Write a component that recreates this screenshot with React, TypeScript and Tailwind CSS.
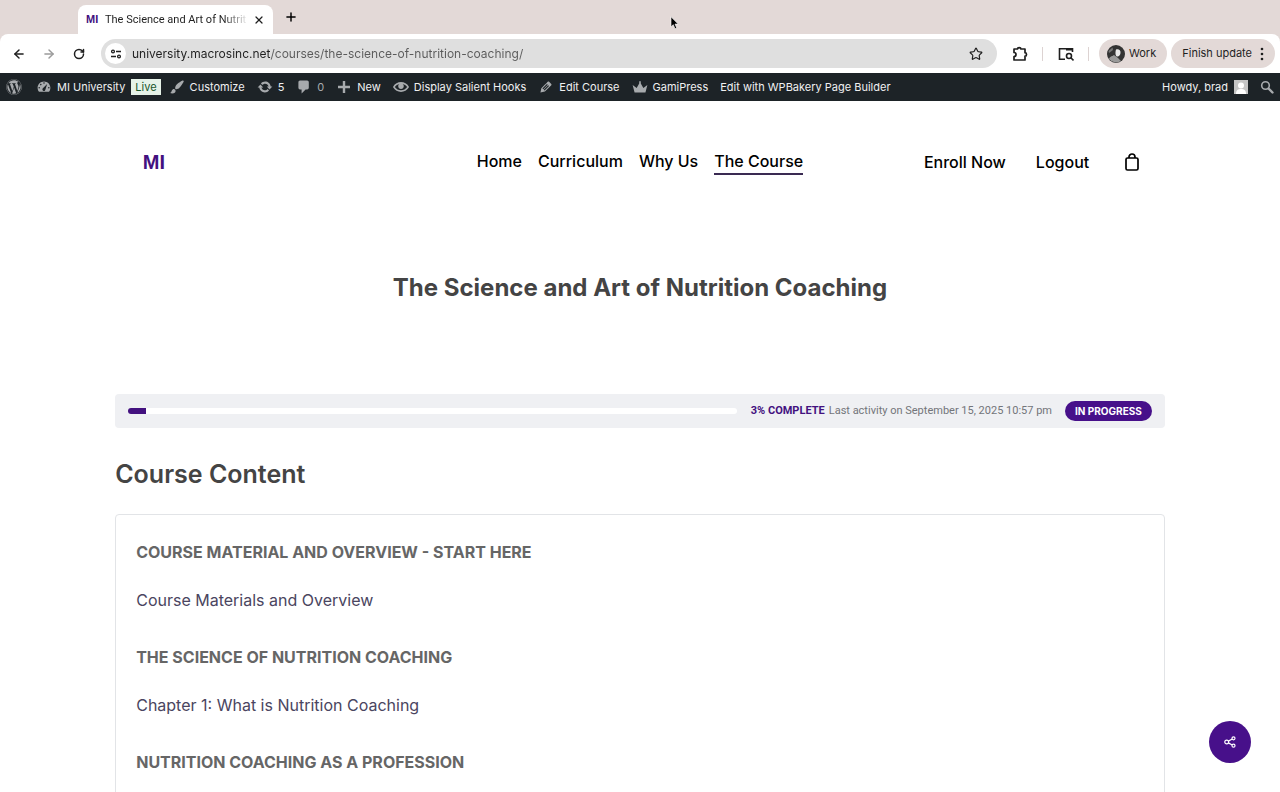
import React from 'react';
import { ArrowLeft, ArrowRight, Plus, RotateCw, Star, X } from 'lucide-react';
import { FaWordpress } from 'react-icons/fa';

const ADMIN_ICONS = {
  dashboard: 'M3.76 16h12.48c1.1-1.37 1.76-3.11 1.76-5 0-4.42-3.58-8-8-8s-8 3.58-8 8c0 1.89.66 3.63 1.76 5zM10 4c.55 0 1 .45 1 1s-.45 1-1 1-1-.45-1-1 .45-1 1-1zM6 6c.55 0 1 .45 1 1s-.45 1-1 1-1-.45-1-1 .45-1 1-1zm-2 4c.55 0 1 .45 1 1s-.45 1-1 1-1-.45-1-1 .45-1 1-1zm12 0c.55 0 1 .45 1 1s-.45 1-1 1-1-.45-1-1 .45-1 1-1zm-7.4 1.6L14 6.3 11.8 13c-.2 1.1-.9 2-1.9 2s-1.9-.9-1.9-1.9c0-.6.2-1.1.6-1.5z',
  brush: 'M18.33 3.57s.27-.8-.31-1.36c-.53-.52-1.22-.24-1.22-.24-.61.3-5.76 3.47-7.67 5.57-.86.96-2.06 3.79-1.09 4.82.92.98 3.96-.17 4.79-1 2.06-2.06 5.21-7.17 5.5-7.79zM1.4 17.65c2.37-1.56 1.46-3.41 3.23-4.64.93-.65 2.22-.62 3.08.29.63.67.8 2.57-.16 3.46-1.57 1.45-4 1.55-6.15.89z',
  update: 'M10.2 3.28c3.53 0 6.43 2.61 6.92 6h2.08l-3.5 4-3.5-4h2.32c-.45-1.97-2.21-3.45-4.32-3.45-1.45 0-2.73.71-3.54 1.78L4.95 5.66C6.23 4.2 8.11 3.28 10.2 3.28zm-.4 13.44c-3.52 0-6.43-2.61-6.92-6H.8l3.5-4 3.5 4H5.48c.45 1.97 2.21 3.45 4.32 3.45 1.45 0 2.73-.71 3.54-1.78l1.71 1.95c-1.28 1.46-3.15 2.38-5.25 2.38z',
  comment: 'M5 2h9c1.1 0 2 .9 2 2v7c0 1.1-.9 2-2 2h-2l-5 5v-5H5c-1.1 0-2-.9-2-2V4c0-1.1.9-2 2-2z',
  plus: 'M17.5 8.5v3h-6v6h-3v-6h-6v-3h6v-6h3v6z',
  eye: 'M19.7 9.4C17.7 6 14 3.9 10 3.9S2.3 6 .3 9.4L0 10l.3.6c2 3.4 5.7 5.5 9.7 5.5s7.7-2.1 9.7-5.5l.3-.6-.3-.6zM10 14.1c-3.1 0-6-1.6-7.7-4.1C3.6 8 5.7 6.6 8 6.1c-.9.6-1.5 1.7-1.5 2.9 0 1.9 1.6 3.5 3.5 3.5s3.5-1.6 3.5-3.5c0-1.2-.6-2.3-1.5-2.9 2.3.5 4.4 1.9 5.7 3.9-1.7 2.5-4.6 4.1-7.7 4.1z',
  pencil: 'M13.89 3.39l2.71 2.72c.46.46.42 1.24.03 1.64l-8.01 8.02-5.56 1.16 1.16-5.58s7.6-7.63 7.99-8.03c.39-.39 1.22-.39 1.68.07zm-2.73 2.79l-5.59 5.61 1.11 1.11 5.54-5.65zm-2.97 8.23l5.58-5.6-1.07-1.08-5.59 5.6z',
  crown: 'M3.2 16.8L.8 7.6l5 3.6L9 5.5V2.8h2v2.7l3.2 5.7 5-3.6-2.4 9.2z',
};

function AdminIcon({ name }: { name: keyof typeof ADMIN_ICONS }) {
  return (
    <svg viewBox="0 0 20 20" className="w-4 h-4 shrink-0 fill-[#a7aaad]" fillRule="evenodd" aria-hidden="true">
      <path d={ADMIN_ICONS[name]} />
    </svg>
  );
}

function BrowserTabs() {
  return (
    <div className="flex items-end h-[34px] bg-[#e3d9d7] pl-[78px]">
      <div className="flex items-center h-[29px] w-[195px] px-2 rounded-t-lg bg-white text-[#1f1f1f]">
        <span className="w-[19px] font-['Liberation_Sans',sans-serif] font-bold text-[11px] text-[#43117f]">MI</span>
        <span title="The Science and Art of Nutrition Coaching" className="flex-1 whitespace-nowrap font-[Roboto,sans-serif] text-[11px] leading-6 [mask-image:linear-gradient(90deg,#000_82%,transparent)]">
          The Science and Art of Nutrit
        </span>
        <button aria-label="Close tab" className="ml-1"><X className="w-3 h-3" strokeWidth={2.5} /></button>
      </div>
      <button aria-label="New tab" className="mb-2.5 ml-[11px]"><Plus className="w-3.5 h-3.5" strokeWidth={2.5} /></button>
    </div>
  );
}

function BrowserToolbar() {
  return (
    <div className="bg-[#e3d9d7]">
      <div className="flex items-center h-[39px] pl-3 pr-[5px] rounded-t-lg bg-white text-[#1f1f1f]">
        <button aria-label="Back"><ArrowLeft className="w-3.5 h-3.5" strokeWidth={2.5} /></button>
        <button aria-label="Forward" className="ml-4 text-[#9b9b9b]"><ArrowRight className="w-3.5 h-3.5" strokeWidth={2.5} /></button>
        <button aria-label="Reload" className="ml-[17px]"><RotateCw className="w-3 h-3" strokeWidth={3} /></button>
        <div className="flex items-center flex-1 h-[29px] ml-4 pl-1 pr-3.5 rounded-full bg-[#dfdfdf]">
          <button aria-label="Site information" className="grid place-items-center w-[21px] h-[21px] rounded-full bg-white">
            <svg viewBox="0 0 12 12" className="w-3 h-3 fill-none stroke-current" strokeWidth="1.3">
              <circle cx="3" cy="3.5" r="1.4" /><path d="M6 3.5h5M1 8.5h5" /><circle cx="9" cy="8.5" r="1.4" />
            </svg>
          </button>
          <input
            aria-label="Address"
            defaultValue="university.macrosinc.net/courses/the-science-of-nutrition-coaching/"
            className="flex-1 min-w-0 ml-[6px] text-xs outline-none text-transparent bg-clip-text bg-[linear-gradient(90deg,#1f1f1f_139px,#5a5a5a_139px)]"
          />
          <button aria-label="Bookmark this page"><Star className="w-3.5 h-3.5" strokeWidth={2} /></button>
        </div>
        <button aria-label="Extensions" className="ml-[15px]">
          <svg viewBox="0 0 16 16" className="w-4 h-4 fill-none stroke-current" strokeWidth="1.7" strokeLinejoin="round">
            <path d="M2 3h3.5a1.7 1.3 0 0 1 3.4 0H13v3.7a1.5 1.7 0 0 1 0 3.4V14H2v-3.5a2 2 0 0 0 0-4z" />
          </svg>
        </button>
        <span className="w-px h-3.5 ml-3.5 bg-[#ddd3d2]" />
        <button aria-label="Search with Lens" className="ml-[15px]">
          <svg viewBox="0 0 16 16" className="w-4 h-4 fill-none stroke-current" strokeWidth="1.6">
            <path d="M7 13.2H1.5V2.8h13V6" /><path d="M8 3.5h6" strokeWidth="2" /><circle cx="11" cy="10" r="2.5" /><path d="M12.8 11.8l2.7 2.7" />
          </svg>
        </button>
        <span className="w-px h-3.5 ml-3.5 bg-[#ddd3d2]" />
        <button className="flex items-center gap-1 h-[29px] ml-2.5 pl-2 pr-[11px] rounded-full bg-[#e3d9d7] text-[11px]">
          <svg viewBox="0 0 18 18" className="w-[18px] h-[18px]">
            <circle cx="9" cy="9" r="9" fill="#333" />
            <path d="M2 14c1-3 4-3 5-4l4 3 3 3a9 9 0 0 1-12-2z" fill="#999" />
            <path d="M9 4.5c2-1 5 0 4.5 3.5-.3 2.5-2 4-3.5 3.5S8 8 9 4.5z" fill="#e8e8e8" />
            <path d="M1.5 6l4-3.5L6 5 2 8z" fill="#777" />
          </svg>
          Work
        </button>
        <button className="flex items-center h-[29px] ml-1 px-[11px] rounded-full bg-[#e3d9d7] text-[11px] whitespace-nowrap">
          Finish update
          <svg viewBox="0 0 4 14" className="w-1 h-3.5 ml-2 fill-current"><circle cx="2" cy="2" r="1.3" /><circle cx="2" cy="7" r="1.3" /><circle cx="2" cy="12" r="1.3" /></svg>
        </button>
      </div>
    </div>
  );
}

function AdminBar() {
  return (
    <div className="flex items-center h-7 px-1.5 bg-[#1d2327] text-[#f0f0f1] text-[11px] whitespace-nowrap">
      <a href="#" aria-label="About WordPress"><FaWordpress className="w-4 h-4 text-[#a7aaad]" /></a>
      <a href="#" className="flex items-center gap-[5px] ml-3.5"><AdminIcon name="dashboard" />MI University</a>
      <span className="ml-1.5 px-1 h-4 leading-4 bg-[#e6f2e8] text-[#17552a]">Live</span>
      <a href="#" className="flex items-center gap-[5px] ml-2"><AdminIcon name="brush" />Customize</a>
      <a href="#" className="flex items-center gap-[5px] ml-3"><AdminIcon name="update" />5</a>
      <a href="#" className="flex items-center gap-[5px] ml-3 text-[#a7aaad]"><AdminIcon name="comment" />0</a>
      <a href="#" className="flex items-center gap-[5px] ml-3"><AdminIcon name="plus" />New</a>
      <a href="#" className="flex items-center gap-[5px] ml-3"><AdminIcon name="eye" />Display Salient Hooks</a>
      <a href="#" className="flex items-center gap-[5px] ml-3"><AdminIcon name="pencil" />Edit Course</a>
      <a href="#" className="flex items-center gap-[5px] ml-3"><AdminIcon name="crown" />GamiPress</a>
      <a href="#" className="ml-3">Edit with WPBakery Page Builder</a>
      <a href="#" className="flex items-center gap-1.5 ml-auto">
        Howdy, brad
        <svg viewBox="0 0 14 14" className="w-3.5 h-3.5"><path d="M0 0h14v14H0z" fill="#c5c5c5" /><circle cx="7" cy="5.5" r="3" fill="#fff" /><path d="M2 14c0-4 2-5 5-5s5 1 5 5z" fill="#fff" /></svg>
      </a>
      <button aria-label="Search" className="ml-3">
        <svg viewBox="0 0 14 14" className="w-3.5 h-3.5 fill-none stroke-[#a7aaad]"><circle cx="5.5" cy="5.5" r="3.8" strokeWidth="1.6" /><path d="M8.5 8.5l4 4" strokeWidth="2.4" strokeLinecap="round" /></svg>
      </button>
    </div>
  );
}

const navLinks = ['Home', 'Curriculum', 'Why Us', 'The Course'];

function SiteHeader() {
  return (
    <header className="grid grid-cols-[1fr_auto_1fr] items-center h-[122px] px-[11%] text-base font-medium text-black">
      <a href="#" className="w-fit ml-0.5 font-['Liberation_Sans',sans-serif] font-bold text-xl text-[#43117f]">MI</a>
      <nav className="flex gap-4">
        {navLinks.map((label) => (
          <a key={label} href="#" className={label === 'The Course' ? 'border-b-2 border-[#3a2a52]' : 'border-b-2 border-transparent'}>
            {label}
          </a>
        ))}
      </nav>
      <div className="flex items-center justify-end">
        <a href="#">Enroll Now</a>
        <a href="#" className="ml-[30px]">Logout</a>
        <a href="#" aria-label="Cart" className="ml-9">
          <svg viewBox="0 0 14 18" className="w-3.5 h-[18px] fill-none stroke-current" strokeWidth="1.7">
            <rect x="1" y="5" width="12" height="12" rx="1.5" /><path d="M4 5V4a3 3 0 0 1 6 0v1" />
          </svg>
        </a>
      </div>
    </header>
  );
}

interface Section {
  heading: string;
  lesson?: string;
}

const sections: Section[] = [
  { heading: 'Course Material and Overview - Start Here', lesson: 'Course Materials and Overview' },
  { heading: 'The Science of Nutrition Coaching', lesson: 'Chapter 1: What is Nutrition Coaching' },
  { heading: 'Nutrition Coaching as a Profession' },
];

function CourseProgress({ percent }: { percent: number }) {
  return (
    <div className="flex items-center h-[34px] px-[13px] rounded bg-[#eff0f3] font-[Roboto,sans-serif] text-[11px] whitespace-nowrap">
      <div role="progressbar" aria-label="Course progress" aria-valuenow={percent} className="flex-1 h-1.5 rounded-full overflow-hidden bg-white">
        <div className="h-full bg-[#43117f]" style={{ width: `${percent}%` }} />
      </div>
      <span className="ml-3.5 font-bold text-[#43117f]">{percent}% COMPLETE</span>
      <span className="ml-1 text-[#73757a]">Last activity on September 15, 2025 10:57 pm</span>
      <span className="ml-[13px] px-[10px] h-5 leading-5 rounded-full bg-[#47108a] text-white text-[10px] font-bold font-['Inter',sans-serif]">IN PROGRESS</span>
    </div>
  );
}

export default function App() {
  return (
    <div className="flex flex-col h-screen overflow-hidden bg-white font-['Inter',sans-serif]">
      <BrowserTabs />
      <BrowserToolbar />
      <AdminBar />
      <div className="flex-1 min-h-0 overflow-hidden">
        <SiteHeader />
        <main className="px-[9%]">
          <h1 className="pt-[49px] text-center text-2xl leading-8 font-bold text-[#444]">The Science and Art of Nutrition Coaching</h1>
          <div className="mt-[90px]"><CourseProgress percent={3} /></div>
          <h2 className="mt-[30px] text-[25px] leading-8 font-semibold text-[#444]">Course Content</h2>
          <div className="mt-6 px-5 rounded-sm border border-[#e2e4e7]">
            {sections.map(({ heading, lesson }) => (
              <section key={heading} className="pt-[25px] h-[105px]">
                <h3 className="text-base leading-6 font-bold uppercase text-[#666]">{heading}</h3>
                {lesson && <a href="#" className="block mt-6 text-base leading-6 text-[#4a4560]">{lesson}</a>}
              </section>
            ))}
          </div>
        </main>
      </div>

      <button aria-label="Share" className="fixed right-[29px] bottom-[29px] grid place-items-center w-[42px] h-[42px] rounded-full bg-[#47108a]">
        <svg viewBox="0 0 12 12" className="w-3 h-3 fill-none stroke-white" strokeWidth="1.2">
          <circle cx="2.7" cy="6" r="1.9" /><circle cx="9.5" cy="2.3" r="1.5" /><circle cx="9.5" cy="9.7" r="1.5" /><path d="M4.4 5.1l3.8-2.1M4.4 6.9l3.8 2.1" />
        </svg>
      </button>
      <svg viewBox="0 0 10 14" className="absolute top-4 left-[670px] w-2.5 h-3.5" aria-hidden="true">
        <path d="M1 .8v10l2.3-2.1 1.7 4 1.7-.7-1.7-3.9h3.2z" fill="#000" stroke="#fff" strokeWidth=".6" />
      </svg>
    </div>
  );
}
